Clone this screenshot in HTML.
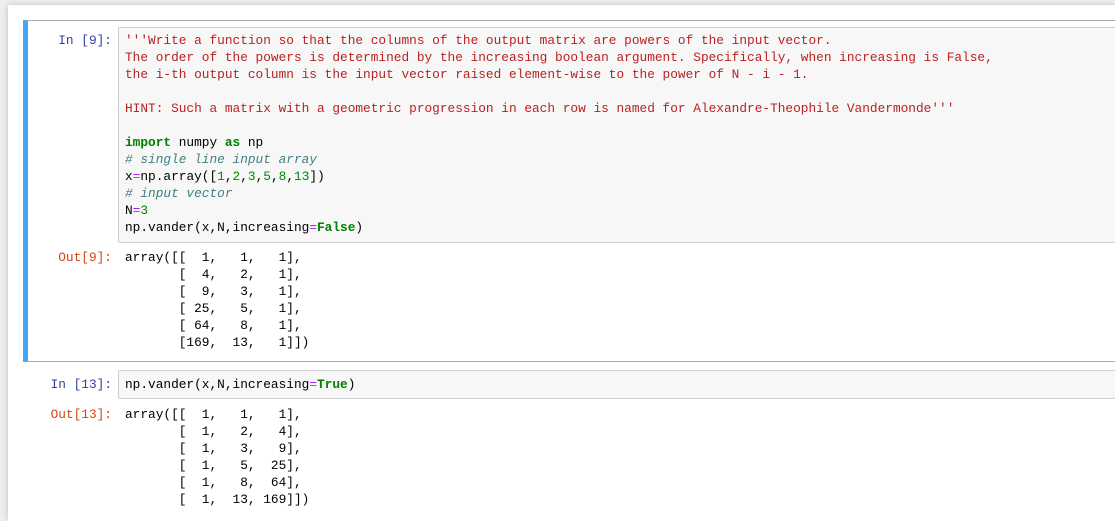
<!DOCTYPE html>
<html><head><style>
body{margin:0;background:#eee;width:1115px;height:521px;overflow:hidden;font-family:"Liberation Mono",monospace;font-size:12.8px;}
.page{position:absolute;left:8px;top:5px;width:1107px;height:516px;background:#fff;box-shadow:0 0 6px rgba(0,0,0,.2);}
.cell1{position:absolute;left:23px;top:20px;width:1092px;height:342px;border-top:1px solid #ababab;border-bottom:1px solid #ababab;border-left:5px solid #42a5f5;box-sizing:border-box;}
.p{position:absolute;text-align:right;width:100px;line-height:17px;white-space:pre}
.in{color:#303F9F}.out{color:#D84315}
.box{position:absolute;background:#f7f7f7;border:1px solid #cfcfcf;border-radius:2px;box-sizing:border-box;}
pre{margin:0;font:inherit;line-height:17px;position:absolute;color:#000}
.s{color:#BA2121}.k{color:#008000;font-weight:bold}.c{color:#408080;font-style:italic}.n{color:#080}.o{color:#AA22FF}
</style></head><body>
<div class="page"></div>
<div class="cell1"></div>
<div class="p in" style="left:12px;top:32px">In [9]:</div>
<div class="box" style="left:118px;top:27px;width:1000px;height:216px"></div>
<pre style="left:125px;top:32px"><span class="s">'''Write a function so that the columns of the output matrix are powers of the input vector.
The order of the powers is determined by the increasing boolean argument. Specifically, when increasing is False,
the i-th output column is the input vector raised element-wise to the power of N - i - 1.

HINT: Such a matrix with a geometric progression in each row is named for Alexandre-Theophile Vandermonde'''</span>

<span class="k">import</span> numpy <span class="k">as</span> np
<span class="c"># single line input array</span>
x<span class="o">=</span>np.array([<span class="n">1</span>,<span class="n">2</span>,<span class="n">3</span>,<span class="n">5</span>,<span class="n">8</span>,<span class="n">13</span>])
<span class="c"># input vector</span>
N<span class="o">=</span><span class="n">3</span>
np.vander(x,N,increasing<span class="o">=</span><span class="k">False</span>)</pre>
<div class="p out" style="left:12px;top:249px">Out[9]:</div>
<pre style="left:125px;top:249px">array([[  1,   1,   1],
       [  4,   2,   1],
       [  9,   3,   1],
       [ 25,   5,   1],
       [ 64,   8,   1],
       [169,  13,   1]])</pre>
<div class="p in" style="left:12px;top:376px">In [13]:</div>
<div class="box" style="left:118px;top:370px;width:1000px;height:29px"></div>
<pre style="left:125px;top:376px">np.vander(x,N,increasing<span class="o">=</span><span class="k">True</span>)</pre>
<div class="p out" style="left:12px;top:406px">Out[13]:</div>
<pre style="left:125px;top:406px">array([[  1,   1,   1],
       [  1,   2,   4],
       [  1,   3,   9],
       [  1,   5,  25],
       [  1,   8,  64],
       [  1,  13, 169]])</pre>
</body></html>
